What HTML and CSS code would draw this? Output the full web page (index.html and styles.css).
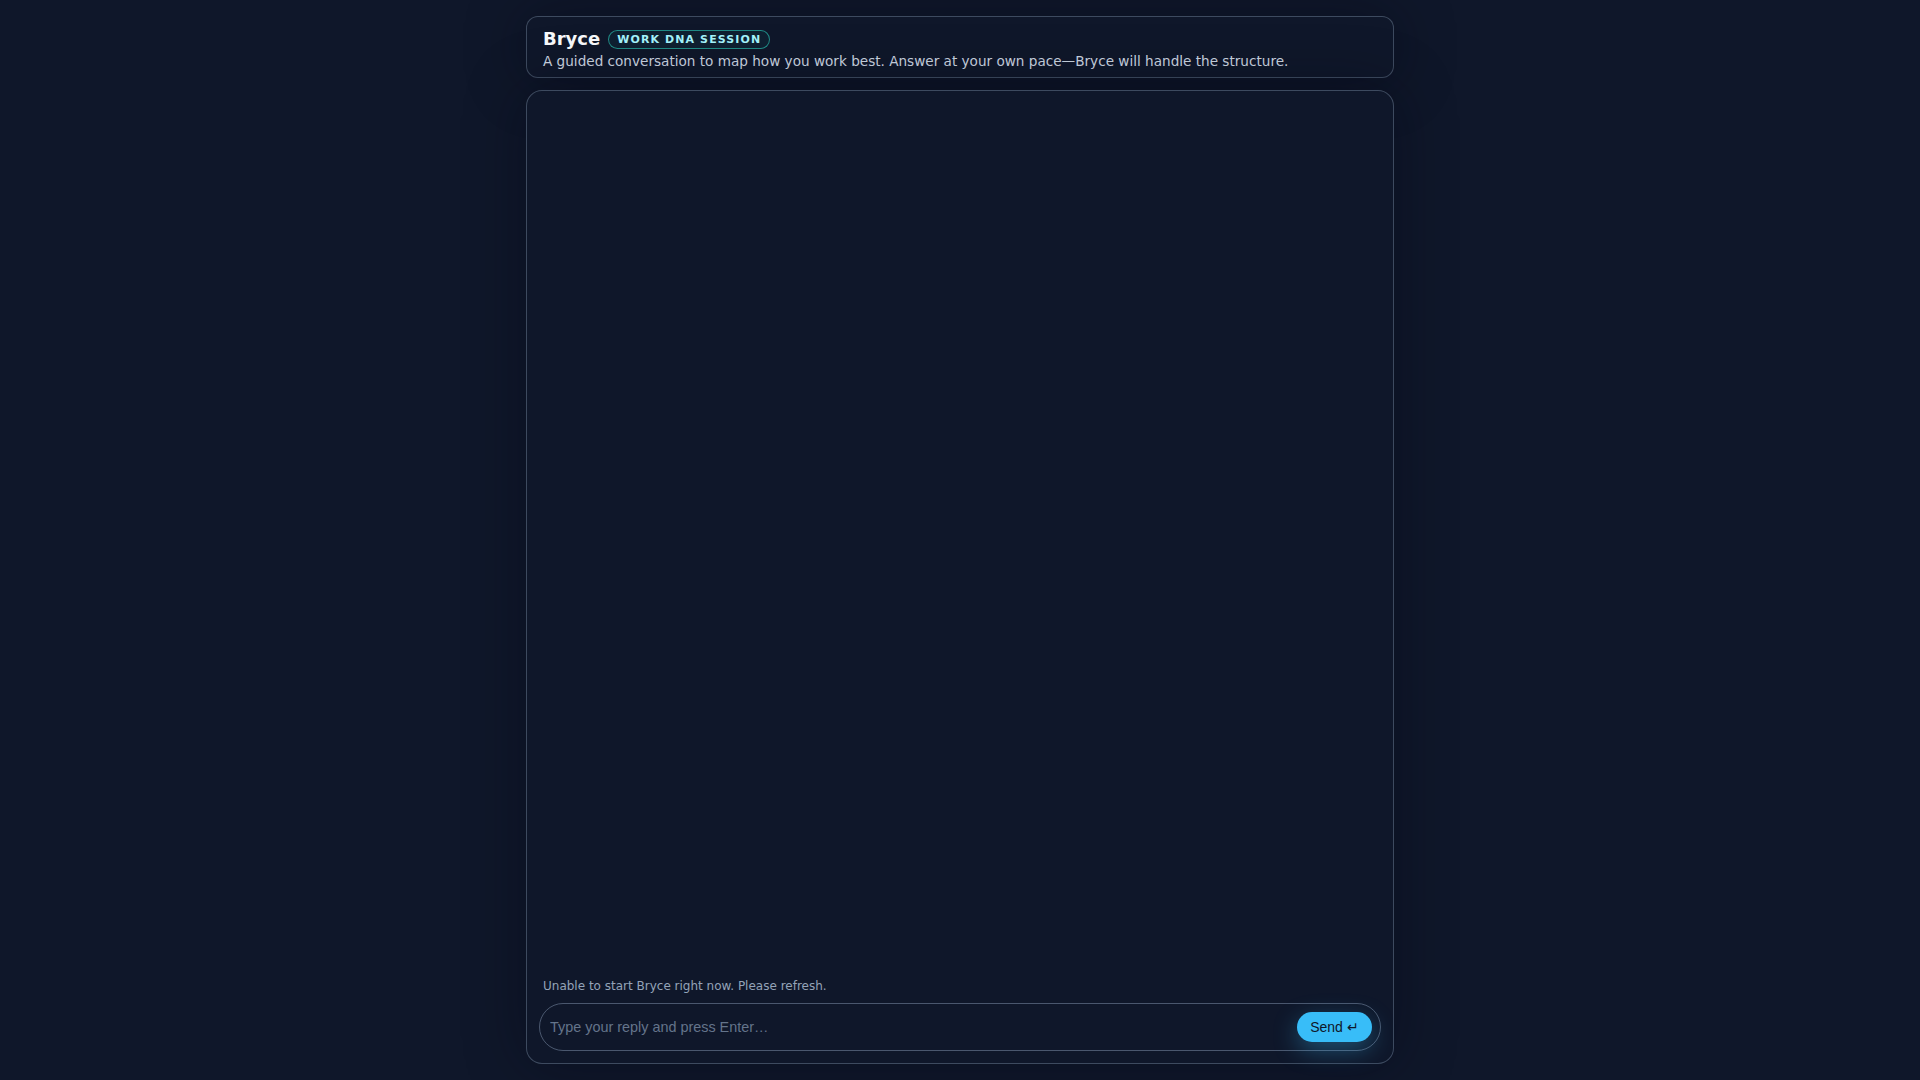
FILE: index.html
```html
<!DOCTYPE html>
<html lang="en">
<head>
<meta charset="utf-8">
<title>Bryce — Work DNA Session</title>
<link rel="stylesheet" href="styles.css">
</head>
<body>
<main class="shell">
  <header class="intro-card">
    <div class="title-row">
      <h1 class="title">Bryce</h1>
      <span class="badge">WORK DNA SESSION</span>
    </div>
    <p class="subtitle">A guided conversation to map how you work best. Answer at your own pace—Bryce will handle the structure.</p>
  </header>
  <section class="chat-card">
    <div class="messages"></div>
    <div class="composer">
      <p class="status">Unable to start Bryce right now. Please refresh.</p>
      <form class="input-pill">
        <input class="reply-input" type="text" placeholder="Type your reply and press Enter…">
        <button class="send-btn" type="button">Send ↵</button>
      </form>
    </div>
  </section>
</main>
</body>
</html>
```
FILE: styles.css
```css
* { box-sizing: border-box; }
html, body { height: 100%; }
body {
  margin: 0;
  background: #0f172a;
  font-family: "DejaVu Sans", sans-serif;
  color: #e2e8f0;
}
.shell {
  width: 868px;
  margin: 0 auto;
  height: 100vh;
  padding: 16px 0;
  display: flex;
  flex-direction: column;
  gap: 12px;
}
.intro-card {
  border: 1px solid rgba(100, 116, 139, 0.55);
  border-radius: 12px;
  padding: 10px 16px 6px;
  background: #0f172a;
  box-shadow: 0 0 60px rgba(2, 6, 18, 0.35);
}
.title-row {
  display: flex;
  align-items: center;
  gap: 8px;
  height: 24px;
}
.title {
  margin: 0;
  font-size: 18px;
  font-weight: 700;
  color: #f8fafc;
  line-height: 24px;
}
.badge {
  display: inline-block;
  border: 1px solid rgba(45, 212, 191, 0.6);
  border-radius: 999px;
  padding: 0 8px;
  font-size: 11px;
  font-weight: 700;
  letter-spacing: 0.1em;
  line-height: 17px;
  color: #a5f3fc;
  background: rgba(20, 184, 166, 0.06);
}
.subtitle {
  margin: 1px 0 0;
  font-size: 13.6px;
  line-height: 19px;
  color: #cbd5e1;
}
.chat-card {
  flex: 1;
  display: flex;
  flex-direction: column;
  border: 1px solid rgba(100, 116, 139, 0.55);
  border-radius: 16px;
  background: #0f172a;
  box-shadow: 0 0 60px rgba(2, 6, 18, 0.35);
}
.messages { flex: 1; }
.composer { padding: 0 12px 12px; }
.status {
  margin: 0 0 9px;
  padding: 0 4px;
  font-size: 12px;
  line-height: 16px;
  color: #94a3b8;
}
.input-pill {
  margin: 0;
  display: flex;
  align-items: center;
  height: 48px;
  border: 1px solid rgba(100, 116, 139, 0.7);
  border-radius: 999px;
  padding: 0 8px 0 10px;
  gap: 8px;
}
.reply-input {
  flex: 1;
  background: transparent;
  border: 0;
  outline: none;
  font-family: "Liberation Sans", Arial, sans-serif;
  font-size: 14.4px;
  color: #e2e8f0;
  padding: 0;
}
.reply-input::placeholder { color: #64748b; }
.send-btn {
  height: 30px;
  width: 75px;
  border: 0;
  border-radius: 999px;
  background: #38bdf8;
  color: #0f172a;
  font-family: "Liberation Sans", Arial, sans-serif;
  font-size: 14px;
  padding: 0;
  box-shadow: 0 8px 24px rgba(56, 189, 248, 0.35);
  cursor: pointer;
}
```
